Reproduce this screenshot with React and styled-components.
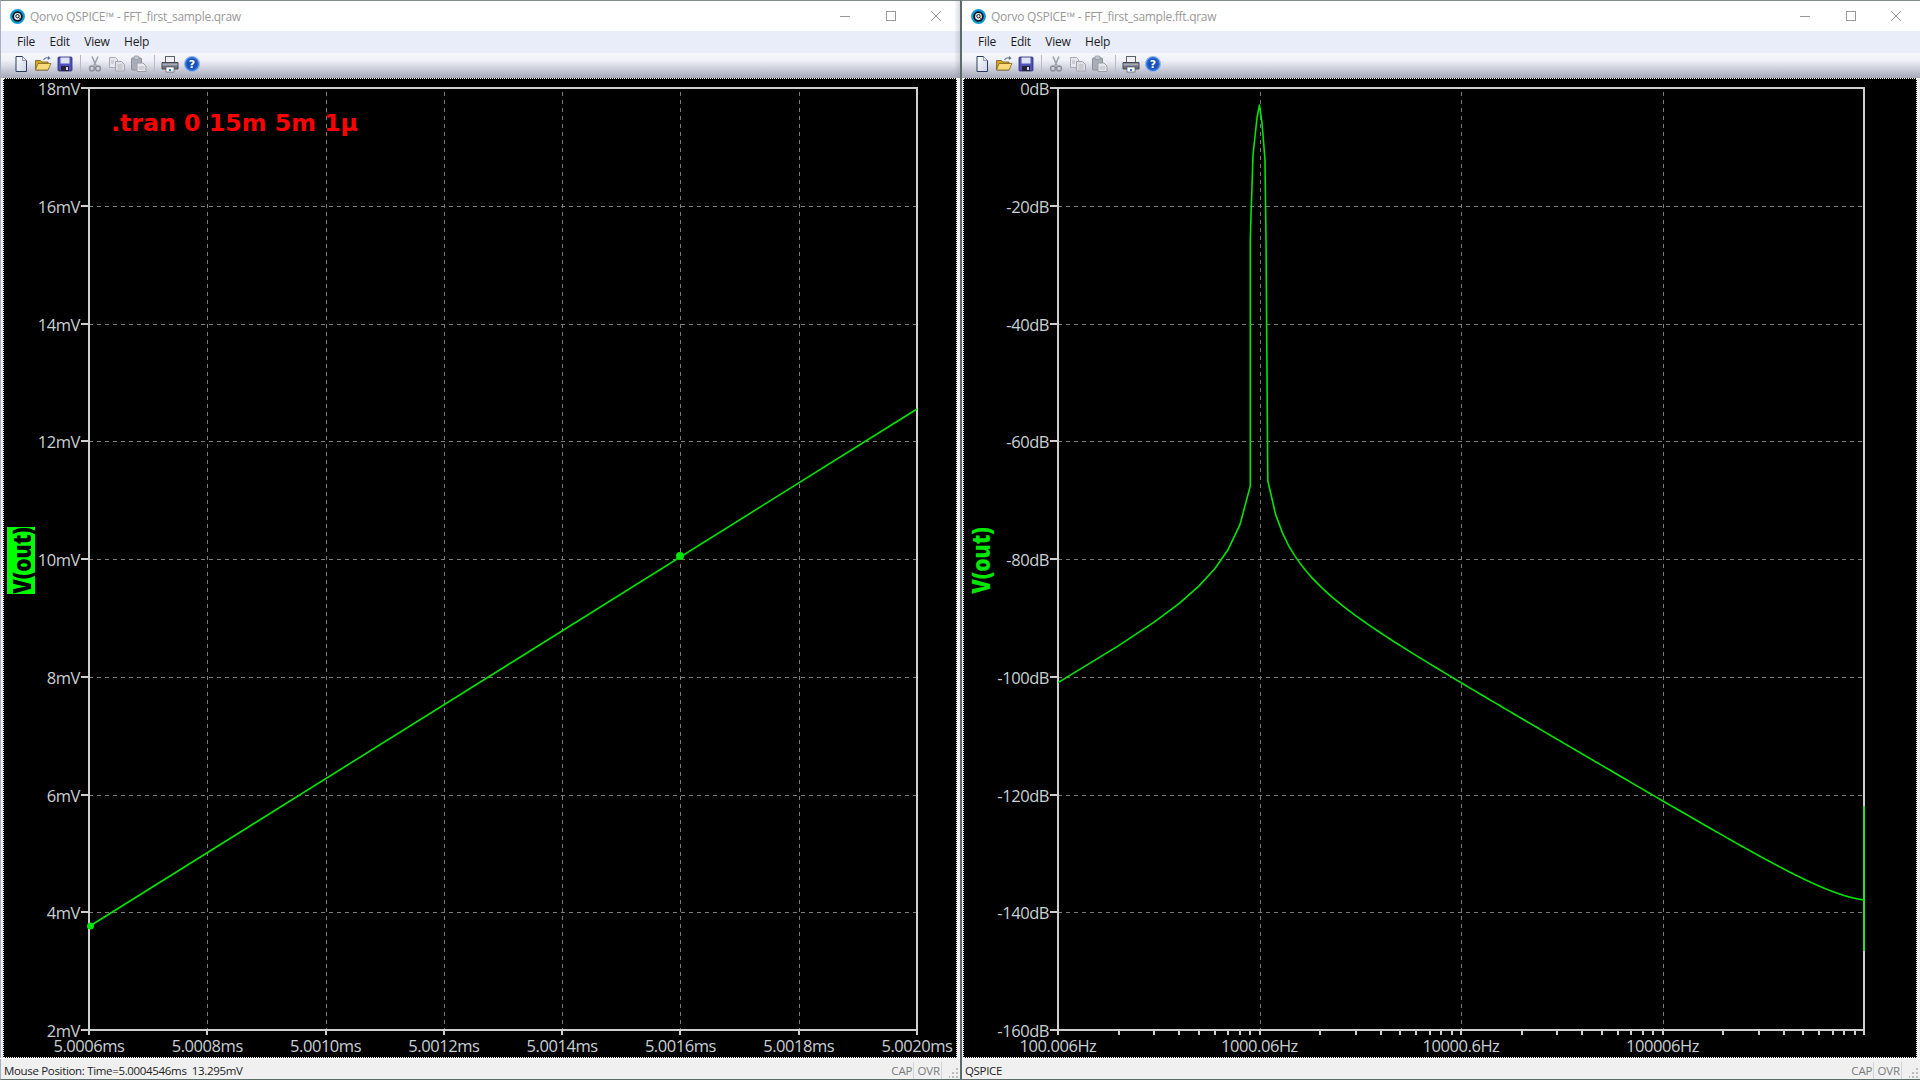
import React from "react";
import styled, { createGlobalStyle } from "styled-components";

const Global = createGlobalStyle`
  html, body { margin: 0; padding: 0; height: 100%; overflow: hidden; background: #f0f0f0; }
  #root { height: 100%; }
`;

const Desktop = styled.div`
  display: grid;
  grid-template-columns: 960px 960px;
  width: 1920px;
  height: 1080px;
`;
const Win = styled.section`
  display: flex;
  flex-direction: column;
  box-sizing: border-box;
  height: 1080px;
  background: #f0f0f0;
  border-top: 1px solid #7f8c8c;
  border-bottom: 1px solid #5f6c6c;
  border-left: ${(p) => (p.$second ? "2px solid #5c6a6a" : "1px solid #a8b0c0")};
`;
const Header = styled.header`
  position: relative;
  margin-left: ${(p) => (p.$second ? "-1px" : "-1px")};
  padding-left: 1px;
  &::after {
    content: "";
    position: absolute;
    top: 0;
    right: 0;
    bottom: 0;
    width: 6px;
    background: linear-gradient(to right, rgba(120, 125, 135, 0), rgba(120, 125, 135, 0.28));
    pointer-events: none;
    display: ${(p) => (p.$second ? "none" : "block")};
  }
`;
const TitleBar = styled.div`
  display: flex;
  align-items: center;
  height: 30px;
  background: #fff;
  font: 12px "Open Sans", "Liberation Sans", sans-serif;
  letter-spacing: -0.28px;
  color: #999;
  padding-left: 9px;
`;
const TitleText = styled.span`
  margin-left: 5px;
  flex: 1;
`;
const WinControls = styled.div`
  display: flex;
  align-items: center;
  gap: 35.5px;
  padding-right: 19px;
`;
const MenuBar = styled.nav`
  display: flex;
  align-items: center;
  height: 22px;
  box-sizing: border-box;
  padding: 0 0 2px 16px;
  background: #e9ecf9;
  gap: 14.5px;
  font: 12px "Open Sans", "Liberation Sans", sans-serif;
  letter-spacing: -0.25px;
  color: #1c1c1c;
`;
const ToolBar = styled.div`
  display: flex;
  align-items: center;
  height: 25px;
  padding: 0 0 4px 9px;
  box-sizing: border-box;
  background: linear-gradient(to bottom, #f5f7fc 0, #eff1f8 30%, #d0d2de 60%, #a8a8b8 100%);
`;
const ToolBtn = styled.span`
  display: flex;
  align-items: center;
  justify-content: center;
  width: 22px;
  height: 18px;
`;
const ToolSep = styled.span`
  width: 1px;
  height: 17px;
  margin: 0 ${(p) => (p.$wide ? "4px" : "3px")} 0 4px;
  background: #b9bcc8;
`;
const PlotFrame = styled.div`
  box-sizing: border-box;
  width: 954px;
  margin-left: ${(p) => (p.$second ? "1px" : "2px")};
  height: 980px;
  background: #000;
  border: 1px dotted #fff;
`;
const PlotSvg = styled.svg`
  display: block;
  width: 952px;
  height: 978px;
`;
const Axis = styled.path`
  fill: none;
  stroke: #cfcfcf;
  stroke-width: 2;
`;
const Ticks = styled.path`
  fill: none;
  stroke: #cfcfcf;
  stroke-width: 2;
`;
const Grid = styled.path`
  fill: none;
  stroke: #7c7c7c;
  stroke-width: 1;
  stroke-dasharray: 4 4;
`;
const Trace = styled.path`
  fill: none;
  stroke: #00e600;
  stroke-width: 1.6;
  stroke-linejoin: round;
`;
const TraceDot = styled.circle`
  fill: #00e600;
`;
const TickLabel = styled.text`
  font: 16.5px "Open Sans", "Liberation Sans", sans-serif;
  letter-spacing: -0.45px;
  fill: #c9d0d4;
  text-anchor: ${(p) => p.$anchor};
`;
const Directive = styled.text`
  font: bold 23.7px "DejaVu Sans", sans-serif;
  fill: #ff0000;
`;
const LabelBox = styled.rect`
  fill: #00ff00;
`;
const TraceLabel = styled.text`
  font: 800 21px "Open Sans", "DejaVu Sans", sans-serif;
  fill: ${(p) => (p.$selected ? "#000" : "#00e600")};
  text-anchor: middle;
`;
const StatusBar = styled.footer`
  display: flex;
  align-items: center;
  height: 21px;
  box-sizing: border-box;
  padding: 2px 0 0 ${(p) => (p.$second ? "3px" : "4px")};
  border-top: 1px solid #fafafa;
  font: 11.5px "Open Sans", "Liberation Sans", sans-serif;
  letter-spacing: -0.33px;
  color: #222;
  margin-left: ${(p) => (p.$second ? "0" : "-1px")};
`;
const StatusText = styled.span`
  flex: 1;
  white-space: pre;
`;
const KeyState = styled.span`
  color: #7a7a7a;
  padding: 0 1px 0 3px;
  border-right: 1px solid #d4d4d4;
  line-height: 17px;
  letter-spacing: -0.1px;
`;
const Grip = styled.svg`
  width: 10px;
  height: 14px;
  margin-left: 7px;
  margin-right: 1px;
  align-self: flex-end;
`;

const Logo = () => (
  <svg width="15" height="15" viewBox="0 0 15 15">
    <circle cx="7.5" cy="7.5" r="7.4" fill="#0a9ad8" />
    <circle cx="7.5" cy="7.5" r="5.2" fill="#0c1418" />
    <circle cx="7.5" cy="7.5" r="3.4" fill="#eef4f8" />
    <circle cx="7.5" cy="7.2" r="1.7" fill="none" stroke="#0c1418" strokeWidth="1" />
    <path d="M8.4 8.2l1.6 1.6" stroke="#0c1418" strokeWidth="1" />
  </svg>
);
const MinIcon = () => (
  <svg width="10" height="10" viewBox="0 0 10 10"><path d="M0 5.5h10" stroke="#999" strokeWidth="1" /></svg>
);
const MaxIcon = () => (
  <svg width="10" height="10" viewBox="0 0 10 10"><rect x=".5" y=".5" width="9" height="9" fill="none" stroke="#999" /></svg>
);
const CloseIcon = () => (
  <svg width="10" height="10" viewBox="0 0 10 10"><path d="M0 0l10 10M10 0L0 10" stroke="#999" strokeWidth="1" /></svg>
);

const NewIcon = () => (
  <svg width="18" height="18" viewBox="0 0 18 18">
    <defs><linearGradient id="ng" x1="0" y1="0" x2="1" y2="1"><stop offset="0" stopColor="#fff" /><stop offset="1" stopColor="#c9d2e6" /></linearGradient></defs>
    <path d="M4 1.5h6.5L14.5 5.5V16.5H4z" fill="url(#ng)" stroke="#2c3a5c" strokeWidth="1" />
    <path d="M10.5 1.5V5.5H14.5" fill="#e4e8f2" stroke="#6a7690" strokeWidth=".7" />
  </svg>
);
const OpenIcon = () => (
  <svg width="18" height="18" viewBox="0 0 18 18">
    <path d="M1.5 15V5.5h5l1.2 1.5H14V15z" fill="#d9a520" stroke="#6e5a20" strokeWidth=".8" />
    <path d="M1.5 15L4 8.5h13L14 15z" fill="#f8da7a" stroke="#7a6424" strokeWidth=".8" />
    <path d="M9.5 5C10.5 2.8 12.5 2.4 14.6 3" fill="none" stroke="#5a6f96" strokeWidth="1.1" />
    <path d="M14 1l2.6 2.2L13.8 5z" fill="#5a6f96" />
  </svg>
);
const SaveIcon = () => (
  <svg width="18" height="18" viewBox="0 0 18 18">
    <rect x="2" y="2" width="14" height="14" rx="1" fill="#5252b8" stroke="#2a2a70" strokeWidth=".8" />
    <rect x="4.5" y="2.5" width="9" height="6" fill="#dfe3f5" />
    <rect x="5" y="11" width="8" height="5" fill="#222238" />
    <rect x="10" y="12" width="2" height="3" fill="#d8d8e8" />
  </svg>
);
const CutIcon = () => (
  <svg width="18" height="18" viewBox="0 0 18 18">
    <path d="M6 1.5l4 9M12 1.5l-4 9" stroke="#9a9fa8" strokeWidth="1.5" fill="none" />
    <circle cx="6" cy="13.5" r="2.4" fill="none" stroke="#8b9099" strokeWidth="1.5" />
    <circle cx="12" cy="13.5" r="2.4" fill="none" stroke="#8b9099" strokeWidth="1.5" />
  </svg>
);
const CopyIcon = () => (
  <svg width="18" height="18" viewBox="0 0 18 18">
    <path d="M1.5 2.5h6l2 2v8h-8z" fill="#e6e7ec" stroke="#a8abb4" />
    <path d="M7.5 6.5h6l3 3v6.5h-9z" fill="#dfe1e6" stroke="#a0a3ac" />
    <path d="M9.5 10h5M9.5 12h5M9.5 14h5M3 6h3M3 8h3" stroke="#aeb1ba" strokeWidth=".9" />
  </svg>
);
const PasteIcon = () => (
  <svg width="18" height="18" viewBox="0 0 18 18">
    <rect x="1.5" y="3" width="10" height="12" rx="1" fill="#a8adb8" stroke="#8a8f9a" />
    <rect x="4" y="1" width="5" height="3.5" rx="1" fill="#c4c8d0" stroke="#8a8f9a" strokeWidth=".7" />
    <path d="M7 8h6l3 3v5.5H7z" fill="#e8e9ee" stroke="#9a9da6" />
    <path d="M8.5 12h6M8.5 14h6" stroke="#aeb1ba" strokeWidth=".9" />
  </svg>
);
const PrintIcon = () => (
  <svg width="18" height="18" viewBox="0 0 18 18">
    <rect x="4.5" y="1.5" width="9" height="6" fill="#f0f1f4" stroke="#5c6068" />
    <path d="M1 7.5h16v6.5H1z" fill="#6e7280" stroke="#44474f" />
    <path d="M1.5 8.5h15v2h-15z" fill="#a6aab4" />
    <rect x="5" y="12" width="8" height="5" fill="#fff" stroke="#50545c" strokeWidth=".7" />
    <rect x="8" y="14" width="2" height="2" fill="#2a7ad0" />
  </svg>
);
const HelpGlyph = styled.text`
  font: bold 11px "DejaVu Sans", sans-serif;
  fill: #fff;
  text-anchor: middle;
`;
const HelpIcon = () => (
  <svg width="18" height="18" viewBox="0 0 18 18">
    <circle cx="9" cy="9" r="7.5" fill="#2a6fd8" stroke="#9ab8e4" strokeWidth="1.2" />
    <circle cx="9" cy="9" r="5.4" fill="#1a52b8" />
    <HelpGlyph x="9" y="13">?</HelpGlyph>
  </svg>
);

const Y0 = 88, Y1 = 1030;

function Plot({ x0, x1, ox, yLabels, xTicks, minor, children }) {
  const step = (Y1 - Y0) / (yLabels.length - 1);
  const ys = yLabels.map((_, i) => Y0 + i * step);
  const inner = ys.slice(1, -1);
  const hGrid = inner.map((y) => `M${x0} ${Math.round(y) + 0.5}H${x1}`).join("");
  const vGrid = xTicks.slice(1, -1).map((t) => `M${Math.round(t.x) + 0.5} ${Y0 + 4}V${Y1}`).join("");
  const yTicks = ys.map((y) => `M${x0 - 8} ${Math.round(y)}H${x0}`).join("");
  const xT = xTicks.map((t) => `M${Math.round(t.x)} ${Y1}V${Y1 + 5}`).join("");
  const mT = (minor || []).map((x) => `M${Math.round(x)} ${Y1}V${Y1 + 5}`).join("");
  return (
    <PlotSvg viewBox={`${ox} 79 952 978`}>
      <Grid d={hGrid + vGrid} />
      <Axis d={`M${x0} ${Y0}H${x1}V${Y1}H${x0}Z`} />
      <Ticks d={yTicks + xT + mT} />
      {yLabels.map((l, i) => (
        <TickLabel key={l} $anchor="end" x={x0 - 9} y={ys[i] + 7}>{l}</TickLabel>
      ))}
      {xTicks.filter((t) => t.label).map((t) => (
        <TickLabel key={t.label} $anchor="middle" x={t.x} y={1052}>{t.label}</TickLabel>
      ))}
      {children}
    </PlotSvg>
  );
}

const leftY = ["18mV", "16mV", "14mV", "12mV", "10mV", "8mV", "6mV", "4mV", "2mV"];
const rightY = ["0dB", "-20dB", "-40dB", "-60dB", "-80dB", "-100dB", "-120dB", "-140dB", "-160dB"];
const leftX = ["5.0006ms", "5.0008ms", "5.0010ms", "5.0012ms", "5.0014ms", "5.0016ms", "5.0018ms", "5.0020ms"].map((label, i) => ({
  label,
  x: 89 + (i * 828) / 7,
}));
const decade = 201.5;
const rightX = [
  { label: "100.006Hz", x: 1058 },
  { label: "1000.06Hz", x: 1058 + decade },
  { label: "10000.6Hz", x: 1058 + 2 * decade },
  { label: "100006Hz", x: 1058 + 3 * decade },
  { x: 1864 },
];
const minor = [];
for (let d = 0; d < 4; d++) for (let k = 2; k < 10; k++) minor.push(1058 + (d + Math.log10(k)) * decade);

// One FFT bin every 100 Hz: a 1 kHz tone with its leakage skirt.
const binPoint = (f) => {
  const skirt = f / Math.abs(f * f - 1e6);
  const arg = (Math.PI * f) / 2.2e6;
  const db = -101 + 20 * Math.log10(((skirt / 1.01e-4) * arg) / Math.sin(arg));
  return [(1058 + Math.log10(f / 100) * decade).toFixed(1), (88 - db * 5.8875).toFixed(1)];
};
const leftBins = [];
for (let f = 100; f <= 900; f += 100) leftBins.push(binPoint(f));
const peak = [[1250.3, 240], [1251, 215], [1252, 187], [1253, 155], [1257, 118], [1259.5, 105], [1262, 123], [1265, 160], [1266, 240]];
const rightBins = [];
for (let f = 1100; f <= 1e6; f += f < 5000 ? 100 : f < 50000 ? 500 : 5000) rightBins.push(binPoint(f));
const spectrumPath = "M" + [...leftBins, ...peak, ...rightBins].map((p) => p.join(" ")).join("L");

function Chrome({ title, second }) {
  return (
    <Header $second={second}>
      <TitleBar>
        <Logo />
        <TitleText>{title}</TitleText>
        <WinControls><MinIcon /><MaxIcon /><CloseIcon /></WinControls>
      </TitleBar>
      <MenuBar>
        <span>File</span><span>Edit</span><span>View</span><span>Help</span>
      </MenuBar>
      <ToolBar>
        <ToolBtn><NewIcon /></ToolBtn>
        <ToolBtn><OpenIcon /></ToolBtn>
        <ToolBtn><SaveIcon /></ToolBtn>
        <ToolSep />
        <ToolBtn><CutIcon /></ToolBtn>
        <ToolBtn><CopyIcon /></ToolBtn>
        <ToolBtn><PasteIcon /></ToolBtn>
        <ToolSep $wide />
        <ToolBtn><PrintIcon /></ToolBtn>
        <ToolBtn><HelpIcon /></ToolBtn>
      </ToolBar>
    </Header>
  );
}

function Status({ text, second }) {
  return (
    <StatusBar $second={second}>
      <StatusText>{text}</StatusText>
      <KeyState>CAP</KeyState>
      <KeyState>OVR</KeyState>
      <Grip viewBox="4 0 10 14">
        <path d="M11 3h2v2h-2zM7 7h2v2H7zM11 7h2v2h-2zM3 11h2v2H3zM7 11h2v2H7zM11 11h2v2h-2z" fill="#bdbdbd" />
      </Grip>
    </StatusBar>
  );
}

export default function App() {
  return (
    <>
      <Global />
      <Desktop>
        <Win>
          <Chrome title="Qorvo QSPICE™ - FFT_first_sample.qraw" />
          <PlotFrame>
            <Plot x0={89} x1={917} ox={4} yLabels={leftY} xTicks={leftX}>
              <Trace d="M90 926L917 409" />
              <TraceDot cx="90.5" cy="926" r="3.5" />
              <TraceDot cx="680" cy="556" r="4" />
              <Directive x="111" y="131">.tran 0 15m 5m 1µ</Directive>
              <LabelBox x="7" y="527" width="28" height="67" />
              <TraceLabel $selected transform="translate(31 560.5) rotate(-90) scale(1 1.15)">V(out)</TraceLabel>
            </Plot>
          </PlotFrame>
          <Status text="Mouse Position: Time=5.0004546ms  13.295mV" />
        </Win>
        <Win $second>
          <Chrome title="Qorvo QSPICE™ - FFT_first_sample.fft.qraw" second />
          <PlotFrame $second>
            <Plot x0={1058} x1={1864} ox={964} yLabels={rightY} xTicks={rightX} minor={minor}>
              <Trace d={spectrumPath} />
              <Trace d="M1864 806V951" />
              <TraceLabel transform="translate(990 560.5) rotate(-90) scale(1 1.15)">V(out)</TraceLabel>
            </Plot>
          </PlotFrame>
          <Status text="QSPICE" second />
        </Win>
      </Desktop>
    </>
  );
}
